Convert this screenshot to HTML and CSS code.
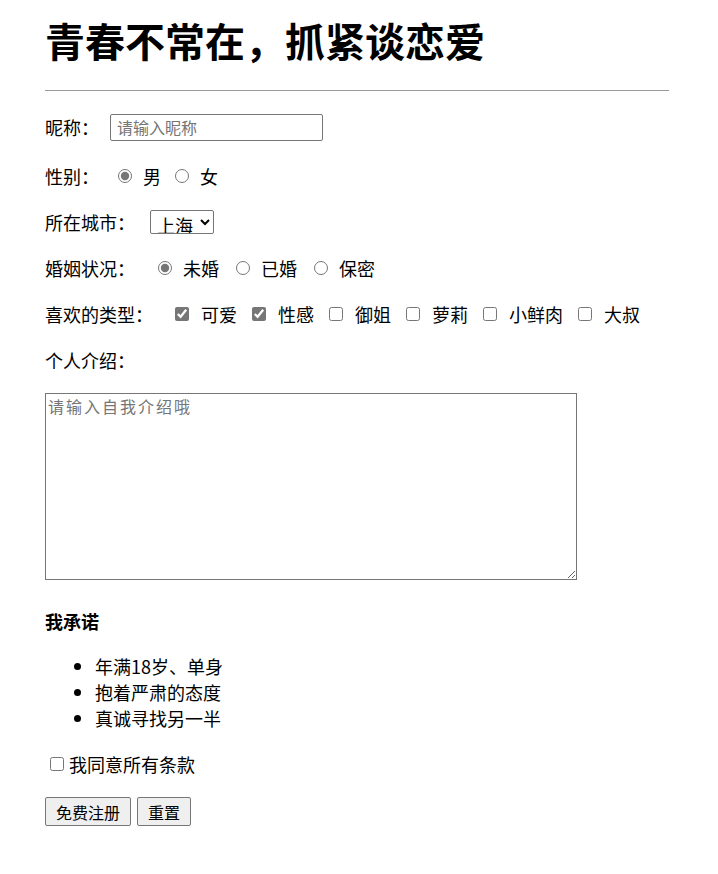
FILE: index.html
```html
<!DOCTYPE html>
<html lang="zh-CN">
<head>
  <meta charset="UTF-8" />
  <meta name="viewport" content="width=device-width, initial-scale=1.0"/>
  <title>青春不常在，抓紧谈恋爱</title>
  <link rel="stylesheet" href="styles.css">
</head>
<body>

  <div class="page">
    <h1>青春不常在，抓紧谈恋爱</h1>
    <hr class="line" />

    <form class="form">
      <div class="row row-first">
        <span class="label">昵称：</span>
        <input class="nick" type="text" placeholder="请输入昵称" />
      </div>

      <div class="row row-sex">
        <span class="label">性别：</span>
        <label class="opt"><input type="radio" name="sex" checked /><span>男</span></label>
        <label class="opt"><input type="radio" name="sex" /><span>女</span></label>
      </div>

      <div class="row">
        <span class="label">所在城市：</span>
        <select class="city">
          <option>上海</option>
          <option>北京</option>
          <option>广州</option>
        </select>
      </div>

      <div class="row row-marry">
        <span class="label">婚姻状况：</span>
        <label class="opt"><input type="radio" name="marry" checked /><span>未婚</span></label>
        <label class="opt"><input type="radio" name="marry" /><span>已婚</span></label>
        <label class="opt"><input type="radio" name="marry" /><span>保密</span></label>
      </div>

      <div class="row row-like">
        <span class="label">喜欢的类型：</span>
        <label class="opt"><input type="checkbox" checked /><span>可爱</span></label>
        <label class="opt"><input type="checkbox" checked /><span>性感</span></label>
        <label class="opt"><input type="checkbox" /><span>御姐</span></label>
        <label class="opt"><input type="checkbox" /><span>萝莉</span></label>
        <label class="opt"><input type="checkbox" /><span>小鲜肉</span></label>
        <label class="opt"><input type="checkbox" /><span>大叔</span></label>
      </div>

      <div class="row">
        <span class="label">个人介绍：</span>
      </div>

      <textarea class="intro" placeholder="请输入自我介绍哦"></textarea>

      <h4 class="promise">我承诺</h4>
      <ul class="terms">
        <li>年满18岁、单身</li>
        <li>抱着严肃的态度</li>
        <li>真诚寻找另一半</li>
      </ul>

      <label class="agree"><input type="checkbox" /><span>我同意所有条款</span></label>

      <div class="btns">
        <button type="submit" class="btn">免费注册</button>
        <button type="reset" class="btn">重置</button>
      </div>
    </form>
  </div>

</body>
</html>
```

FILE: styles.css
```css
body {
  margin: 0;
  font-family: "Noto Sans CJK SC", "Noto Sans", sans-serif;
  font-size: 18px;
  color: #000;
  background: #fff;
}
.page {
  padding: 0 49px 0 45px;
}
h1 {
  margin: 16px 0 0;
  font-size: 40px;
  line-height: 48px;
  font-weight: bold;
}
.line {
  margin: 26px 0 0;
  border: 0;
  border-top: 1px solid #9a9a9a;
  height: 0;
}
.form {
  margin: 0;
}
.row {
  display: flex;
  align-items: center;
  height: 28px;
  margin-top: 18px;
  white-space: nowrap;
}
.row-first {
  height: 32px;
  margin-top: 20px;
}
.row-first + .row {
  margin-top: 19px;
}
.label {
  flex: none;
}
input[type="radio"],
input[type="checkbox"] {
  width: 14px;
  height: 14px;
  margin: 0;
  accent-color: #767676;
}
.opt {
  display: flex;
  align-items: center;
  margin-left: 14px;
}
.opt span {
  margin-left: 11px;
}
.row-sex .label + .opt {
  margin-left: 19px;
}
.row-marry .opt {
  margin-left: 17px;
}
.row-marry .label + .opt {
  margin-left: 23px;
}
.row-like .opt {
  margin-left: 15px;
}
.row-like .opt span {
  margin-left: 12px;
}
.row-like .label + .opt {
  margin-left: 22px;
}
.nick {
  margin-left: 11px;
  width: 213px;
  height: 27px;
  box-sizing: border-box;
  padding: 0 6px;
  border: 1px solid #767676;
  border-radius: 2px;
  font-family: inherit;
  font-size: 16px;
}
.nick::placeholder,
.intro::placeholder {
  color: #757575;
}
.city {
  margin-left: 15px;
  width: 64px;
  height: 24px;
  padding: 0 1px 0 2px;
  font-family: inherit;
  font-size: 18px;
  color: #000;
  border: 1px solid #767676;
  border-radius: 2px;
  background: #fff;
}
.intro {
  display: block;
  margin-top: 19px;
  width: 532px;
  height: 187px;
  box-sizing: border-box;
  padding: 1px 2px;
  border: 1px solid #767676;
  border-radius: 0;
  font-family: inherit;
  font-size: 16px;
  letter-spacing: 2px;
  line-height: 22px;
}
.promise {
  margin: 27px 0 0;
  font-size: 18px;
  line-height: 28px;
  font-weight: bold;
}
.terms {
  margin: 18px 0 0;
  padding-left: 50px;
  line-height: 26px;
}
.agree {
  display: flex;
  align-items: center;
  height: 26px;
  margin-top: 20px;
}
.agree input {
  margin-left: 5px;
}
.agree span {
  margin-left: 5px;
}
.btns {
  display: flex;
  gap: 6px;
  margin-top: 20px;
}
.btn {
  height: 29px;
  padding: 0 10px;
  font-family: inherit;
  font-size: 16px;
  color: #000;
  background: #efefef;
  border: 1px solid #767676;
  border-radius: 2px;
}
```
